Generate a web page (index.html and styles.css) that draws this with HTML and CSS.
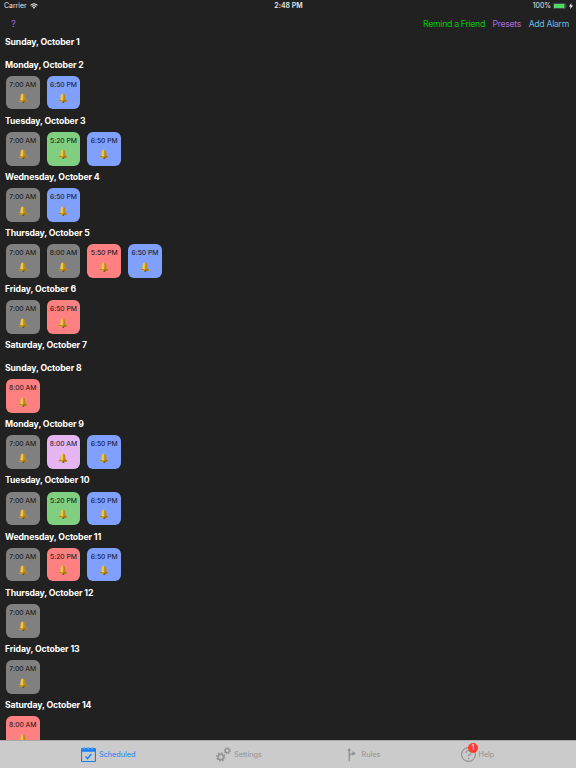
FILE: index.html
```html
<!DOCTYPE html>
<html lang="en">
<head>
<meta charset="utf-8">
<title>Scheduled</title>
<link rel="stylesheet" href="styles.css">
</head>
<body>
<svg class="defs" aria-hidden="true">
  <defs>
    <linearGradient id="gold" x1="0" x2="1" y1="0" y2="0">
      <stop offset="0" stop-color="#c99a20"/><stop offset=".38" stop-color="#f9d74e"/><stop offset=".6" stop-color="#b5831a"/><stop offset="1" stop-color="#d9a52c"/>
    </linearGradient>
    <symbol id="bell" viewBox="0 0 18 18">
      <path fill="#5f400a" d="M6.500 14h5.500l-1 3.400H8.500z"/>
      <path fill="url(#gold)" d="M7.400 1.500Q8.900.2 10.400 1.500C12.800 2.700 13 5 13.400 8.400c.3 2.400 1.200 3.900 3.500 5.300q.6 1.800-1 2L2 15.400q-1.300-.8-.4-2.300c2-1.200 2.600-2.600 2.900-5C5 4.700 5 2.600 7.400 1.500z"/>
      <path fill="none" stroke="#7d5609" stroke-width="1.100" d="M2.200 13.400q6 1.600 14 .7"/>
    </symbol>
  </defs>
</svg>
<div class="screen">
  <header class="status">
    <div class="carrier">Carrier
      <svg class="wifi" viewBox="0 0 16 12"><path d="M1 4.300q7-6 14 0M3.500 7q4.500-3.800 9 0" fill="none" stroke="#fff" stroke-width="2"/><path d="M5.500 9q2.500-2 5 0L8 11.700z" fill="#fff"/></svg>
    </div>
    <div class="clock">2:48 PM</div>
    <div class="power">100%
      <svg class="battery" viewBox="0 0 28 12"><rect x=".5" y=".5" width="24" height="11" rx="2.500" fill="none" stroke="#8b8b8b"/><rect x="2" y="2" width="21" height="8" rx="1" fill="#4cd964"/><path d="M26 4q2 2 0 4z" fill="#8b8b8b"/></svg>
      <svg class="bolt" viewBox="0 0 8 12"><path d="M5 0 0 7h3.300L2.500 12 8 4.800H4.500z" fill="#fff"/></svg>
    </div>
  </header>
  <nav class="toolbar">
    <a class="hint">?</a>
    <a class="remind">Remind a Friend</a>
    <a class="presets">Presets</a>
    <a class="add">Add Alarm</a>
  </nav>
  <main class="schedule">
    <section><h2>Sunday, October 1</h2></section>
    <section><h2>Monday, October 2</h2><div class="alarms">
      <div class="alarm gray"><span>7:00 AM</span><svg><use href="#bell"/></svg></div>
      <div class="alarm blue"><span>6:50 PM</span><svg><use href="#bell"/></svg></div>
    </div></section>
    <section><h2>Tuesday, October 3</h2><div class="alarms">
      <div class="alarm gray"><span>7:00 AM</span><svg><use href="#bell"/></svg></div>
      <div class="alarm green"><span>5:20 PM</span><svg><use href="#bell"/></svg></div>
      <div class="alarm blue"><span>6:50 PM</span><svg><use href="#bell"/></svg></div>
    </div></section>
    <section><h2>Wednesday, October 4</h2><div class="alarms">
      <div class="alarm gray"><span>7:00 AM</span><svg><use href="#bell"/></svg></div>
      <div class="alarm blue"><span>6:50 PM</span><svg><use href="#bell"/></svg></div>
    </div></section>
    <section><h2>Thursday, October 5</h2><div class="alarms">
      <div class="alarm gray"><span>7:00 AM</span><svg><use href="#bell"/></svg></div>
      <div class="alarm gray"><span>8:00 AM</span><svg><use href="#bell"/></svg></div>
      <div class="alarm red"><span>5:50 PM</span><svg><use href="#bell"/></svg></div>
      <div class="alarm blue"><span>6:50 PM</span><svg><use href="#bell"/></svg></div>
    </div></section>
    <section><h2>Friday, October 6</h2><div class="alarms">
      <div class="alarm gray"><span>7:00 AM</span><svg><use href="#bell"/></svg></div>
      <div class="alarm red"><span>6:50 PM</span><svg><use href="#bell"/></svg></div>
    </div></section>
    <section><h2>Saturday, October 7</h2></section>
    <section><h2>Sunday, October 8</h2><div class="alarms">
      <div class="alarm red"><span>8:00 AM</span><svg><use href="#bell"/></svg></div>
    </div></section>
    <section><h2>Monday, October 9</h2><div class="alarms">
      <div class="alarm gray"><span>7:00 AM</span><svg><use href="#bell"/></svg></div>
      <div class="alarm pink"><span>8:00 AM</span><svg><use href="#bell"/></svg></div>
      <div class="alarm blue"><span>6:50 PM</span><svg><use href="#bell"/></svg></div>
    </div></section>
    <section><h2>Tuesday, October 10</h2><div class="alarms">
      <div class="alarm gray"><span>7:00 AM</span><svg><use href="#bell"/></svg></div>
      <div class="alarm green"><span>5:20 PM</span><svg><use href="#bell"/></svg></div>
      <div class="alarm blue"><span>6:50 PM</span><svg><use href="#bell"/></svg></div>
    </div></section>
    <section><h2>Wednesday, October 11</h2><div class="alarms">
      <div class="alarm gray"><span>7:00 AM</span><svg><use href="#bell"/></svg></div>
      <div class="alarm red"><span>5:20 PM</span><svg><use href="#bell"/></svg></div>
      <div class="alarm blue"><span>6:50 PM</span><svg><use href="#bell"/></svg></div>
    </div></section>
    <section><h2>Thursday, October 12</h2><div class="alarms">
      <div class="alarm gray"><span>7:00 AM</span><svg><use href="#bell"/></svg></div>
    </div></section>
    <section><h2>Friday, October 13</h2><div class="alarms">
      <div class="alarm gray"><span>7:00 AM</span><svg><use href="#bell"/></svg></div>
    </div></section>
    <section><h2>Saturday, October 14</h2><div class="alarms">
      <div class="alarm red"><span>8:00 AM</span><svg><use href="#bell"/></svg></div>
    </div></section>
  </main>
  <footer class="tabs">
    <a class="tab active">
      <svg class="icon-calendar" viewBox="0 0 15 15"><path fill="currentColor" fill-rule="evenodd" d="M1 1h1.700v1q.6.8 1.200 0V1h2.700v1q.6.800 1.200 0V1h2.700v1q.6.800 1.200 0V1H14q1 0 1 1v12q0 1-1 1H1q-1 0-1-1V2q0-1 1-1zm.1 3.800v9.100h12.800V4.800z"/><path d="M3.300 0v1.700M7.200 0v1.700M11.100 0v1.700" stroke="currentColor" stroke-width=".8"/><path d="m4.500 9.600 2 2L10.300 7" fill="none" stroke="currentColor" stroke-width="1.400"/></svg>
      <span>Scheduled</span>
    </a>
    <a class="tab">
      <svg class="icon-gears" viewBox="0 0 15 15"><g fill="none" stroke="currentColor"><circle cx="4.800" cy="10" r="2.700" stroke-width="1.600"/><circle cx="4.800" cy="10" r="4" stroke-width="1.400" stroke-dasharray="1.570 1.570"/><circle cx="11.300" cy="3.700" r="2" stroke-width="1.200"/><circle cx="11.300" cy="3.700" r="3" stroke-width="1.100" stroke-dasharray="1.178 1.178"/></g></svg>
      <span>Settings</span>
    </a>
    <a class="tab">
      <svg class="icon-rules" viewBox="0 0 10 15"><path d="M2.500 15V2M2.500 9.500Q3 6.500 7 6.500" fill="none" stroke="currentColor" stroke-width="1.500"/><path d="M2.500 0 4.700 3.300H.3zM6 4l4 2.500L6 9z" fill="currentColor"/></svg>
      <span>Rules</span>
    </a>
    <a class="tab">
      <i class="help-icon"><svg viewBox="0 0 15 15"><circle cx="7.500" cy="7.500" r="6.900" fill="none" stroke="currentColor" stroke-width="1.200"/><path d="M5 6q0-2.500 2.600-2.500T10.100 6Q10 7.200 8.500 7.900 7.600 8.300 7.600 9.600" fill="none" stroke="currentColor" stroke-width="1.200"/><circle cx="7.600" cy="11.500" r=".75" fill="currentColor"/></svg><b class="badge">1</b></i>
      <span>Help</span>
    </a>
  </footer>
</div>
</body>
</html>
```
FILE: styles.css
```css
* { box-sizing: border-box; }
body { margin: 0; background: #212121; color: #fff; font-family: Inter, "Liberation Sans", sans-serif; }
.defs { position: absolute; width: 0; height: 0; }
svg { display: block; flex: none; }
.screen { width: 576px; height: 768px; display: flex; flex-direction: column; overflow: hidden; }
.status { height: 12px; flex: none; display: grid; grid-template-columns: 1fr auto 1fr; align-items: center; padding: 0 3px 0 4px; font-size: 6.900px; line-height: 12px; color: #e8e8e8; }
.carrier, .power { display: flex; align-items: center; gap: 3px; }
.power { justify-content: flex-end; gap: 2px; }
.clock { font-weight: 600; letter-spacing: .05px; }
.wifi { width: 8px; height: 6px; }
.battery { width: 14px; height: 6px; }
.bolt { width: 4px; height: 6px; }
.toolbar { height: 19px; flex: none; display: flex; align-items: center; gap: 7.500px; padding: 5px 7px 0 11px; font-size: 8.700px; line-height: 14px; letter-spacing: -.3px; }
.hint { margin-right: auto; color: #b35cdb; font-size: 9.500px; }
.remind { color: #0c0; }
.presets { color: #b069d5; }
.add { color: #62bce5; }
.schedule { flex: 1; min-height: 0; overflow: hidden; }
h2 { margin: 0; height: 22.500px; padding-left: 5px; font-size: 8.700px; line-height: 22.500px; font-weight: 700; letter-spacing: -.12px; }
.alarms { display: flex; gap: 6.850px; padding-left: 5.800px; height: 33.700px; }
.alarm { width: 33.900px; height: 33.700px; margin-top: -.3px; border-radius: 6px; display: flex; flex-direction: column; align-items: center; padding-top: 4px; color: #0e0e10; font-size: 6.800px; line-height: 9px; letter-spacing: -.02px; white-space: nowrap; }
.alarm svg { width: 10px; height: 10px; margin-top: 4.500px; }
.gray { background: #808080; }
.blue { background: #80a0ff; }
.green { background: #80cf80; }
.red { background: #ff8080; }
.pink { background: #e5b5f2; }
.tabs { height: 28px; flex: none; display: grid; grid-template-columns: 81px 135px 130.500px 114px 1fr; border-top: 1px solid #aaa; background: #cbcbcb; }
.tab { display: flex; align-items: center; gap: 3px; color: #929292; font-size: 7.300px; line-height: 12px; letter-spacing: -.03px; }
.tab:first-child { grid-column: 2; }
.tab.active { color: #1680fb; }
.icon-calendar, .icon-gears { width: 15px; height: 15px; }
.icon-rules { width: 9px; height: 15px; margin-right: 3px; }
.help-icon { position: relative; width: 15px; height: 15px; font-style: normal; }
.badge { position: absolute; left: 7.500px; top: -4.500px; width: 10px; height: 10px; border-radius: 50%; background: #ff3b30; color: #fff; font-size: 7px; line-height: 10px; text-align: center; font-weight: 400; }
```
